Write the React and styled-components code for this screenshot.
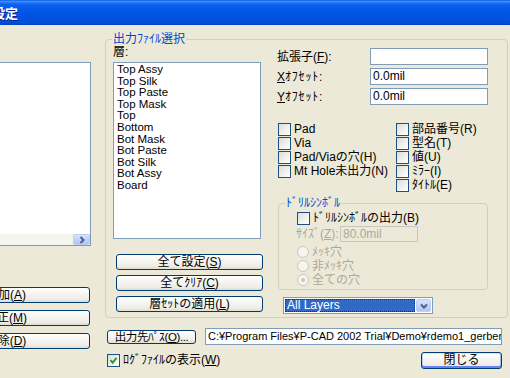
import React from "react";
import styled, { createGlobalStyle } from "styled-components";

const GlobalStyle = createGlobalStyle`
	html, body {
		margin: 0;
		padding: 0;
		background: #ece9d8;
	}
`;

const FONT = `"Liberation Sans", "Noto Sans CJK JP", sans-serif`;

const Window = styled.div`
	width: 510px;
	height: 378px;
	overflow: hidden;
	background: #ece9d8;
	font-family: ${FONT};
	font-size: 12px;
	color: #000;
`;

const TitleBar = styled.div`
	height: 25px;
	display: flex;
	align-items: center;
	overflow: hidden;
	background: linear-gradient(180deg, #0a5fe8 0%, #3d8cfb 6%, #0f62ef 16%, #0056e6 45%, #0051df 80%, #0047cc 100%);
`;

const TitleText = styled.div`
	margin-left: -8px;
	color: #fff;
	font-family: "Noto Sans CJK JP", sans-serif;
	font-weight: bold;
	font-size: 13px;
	line-height: 16px;
	white-space: nowrap;
	text-shadow: 1px 1px #0a1f8c;
`;

const Body = styled.div`
	display: flex;
	align-items: flex-start;
`;

const LeftCol = styled.div`
	flex-shrink: 0;
	width: 169px;
	margin-left: -78px;
	display: flex;
	flex-direction: column;
`;

const SideList = styled.div`
	box-sizing: border-box;
	margin-top: 37px;
	height: 184px;
	border: 1px solid #7f9db9;
	background: #fff;
	display: flex;
	flex-direction: column;
	justify-content: flex-end;
`;

const HScroll = styled.div`
	height: 11px;
	display: flex;
	justify-content: flex-end;
	background: #f5f4ef;
`;

const ScrollArrow = styled.div`
	box-sizing: border-box;
	width: 17px;
	height: 100%;
	display: flex;
	align-items: center;
	justify-content: center;
	border: 1px solid #bccdf7;
	border-radius: 2px;
	background: linear-gradient(180deg, #d6e2fd 0%, #c1d3fb 50%, #b1c6f6 100%);
`;

const SideButtons = styled.div`
	margin-top: 41px;
	display: flex;
	flex-direction: column;
	gap: 7px;
`;

const XPButton = styled.button`
	box-sizing: border-box;
	flex-shrink: 0;
	width: ${(p) => p.$w}px;
	height: ${(p) => p.$h || 16}px;
	padding: 0;
	border: 1px solid #003c74;
	border-radius: 3px;
	background: linear-gradient(180deg, #ffffff 0%, #f5f4f0 45%, #ecebe6 85%, #d6d0c5 100%);
	font-family: ${FONT};
	font-size: ${(p) => p.$fs || 12}px;
	letter-spacing: ${(p) => p.$ls || 0}px;
	line-height: 13px;
	color: #000;
	white-space: nowrap;
	box-shadow: ${(p) =>
		p.$default
			? "inset 0 1px #cee7ff, inset 0 -2px #6982ee, inset 1px 0 #b9d1fa, inset -1px 0 #9db9eb"
			: "inset 0 -1px #e3e0d6"};
`;

const Key = styled.u`
	text-decoration: underline;
	text-underline-offset: 1px;
`;

const RightCol = styled.div`
	flex-shrink: 0;
	width: 403px;
	margin-left: 14px;
	display: flex;
	flex-direction: column;
`;

const GroupBox = styled.div`
	box-sizing: border-box;
	margin-top: ${(p) => p.$top || 0}px;
	margin-left: ${(p) => p.$left || 0}px;
	width: ${(p) => (p.$w ? `${p.$w}px` : "auto")};
	height: ${(p) => p.$h}px;
	border: 1px solid #d0d0bf;
	border-radius: 4px;
	display: flex;
	flex-direction: column;
`;

const GroupTitle = styled.div`
	align-self: flex-start;
	height: 14px;
	margin: -8px 0 -6px 6px;
	padding: 0 1px;
	background: #ece9d8;
	color: #0046d5;
	line-height: 14px;
	white-space: nowrap;
`;

const GroupInner = styled.div`
	display: flex;
	padding-left: 7px;
`;

const LayerCol = styled.div`
	width: 150px;
	display: flex;
	flex-direction: column;
`;

const LayerLabel = styled.div`
	margin-top: 5px;
	height: 14px;
	line-height: 14px;
`;

const LayerList = styled.div`
	box-sizing: border-box;
	margin-top: 3px;
	width: 148px;
	height: 177px;
	padding: 1px 3px;
	border: 1px solid #7f9db9;
	background: #fff;
`;

const LayerItem = styled.div`
	font-size: 11.5px;
	line-height: 11.6px;
	white-space: nowrap;
`;

const ButtonStack = styled.div`
	margin: 15px 0 0 3px;
	display: flex;
	flex-direction: column;
	gap: 5px;
`;

const OptionCol = styled.div`
	width: 211px;
	margin-left: 14px;
	display: flex;
	flex-direction: column;
`;

const Fields = styled.div`
	margin-top: 8px;
	display: flex;
	flex-direction: column;
	gap: 3px;
`;

const FieldRow = styled.div`
	display: flex;
	align-items: center;
	height: ${(p) => p.$h || 17}px;
	margin-top: ${(p) => p.$top || 0}px;
`;

const FieldLabel = styled.div`
	width: ${(p) => p.$w}px;
	margin-left: ${(p) => p.$left || 0}px;
	line-height: 14px;
	white-space: nowrap;
	color: ${(p) => (p.$disabled ? "#aca899" : "#000")};
`;

const Kana = styled.span`
	letter-spacing: 0.8px;
`;

const TextBox = styled.div`
	box-sizing: border-box;
	flex-shrink: 0;
	width: ${(p) => p.$w}px;
	height: ${(p) => p.$h || 17}px;
	margin-left: ${(p) => p.$left || 0}px;
	padding-left: 2px;
	border: 1px solid ${(p) => (p.$disabled ? "#c9c7ba" : "#7f9db9")};
	background: ${(p) => (p.$disabled ? "#ece9d8" : "#fff")};
	color: ${(p) => (p.$disabled ? "#aca899" : "#000")};
	font-size: ${(p) => p.$fs || 12}px;
	line-height: ${(p) => (p.$h || 17) - 2}px;
	white-space: nowrap;
	overflow: hidden;
`;

const CheckGrid = styled.div`
	margin: 17px 0 0 1px;
	display: flex;
`;

const CheckCol = styled.div`
	width: ${(p) => p.$w || 118}px;
	display: flex;
	flex-direction: column;
`;

const CheckRow = styled.div`
	display: flex;
	align-items: center;
	gap: 3px;
	height: ${(p) => p.$h || 14}px;
	margin-top: ${(p) => p.$top || 0}px;
	line-height: 13px;
	white-space: nowrap;
	color: ${(p) => (p.$disabled ? "#aca899" : "#000")};
`;

const CheckBox = styled.span`
	box-sizing: border-box;
	flex-shrink: 0;
	width: 13px;
	height: 13px;
	display: inline-flex;
	align-items: center;
	justify-content: center;
	border: 1px solid #1c5180;
	background: linear-gradient(135deg, #dcdcd7 0%, #f2f2ef 60%, #ffffff 100%);
`;

const Radio = styled.span`
	box-sizing: border-box;
	flex-shrink: 0;
	width: 12px;
	height: 12px;
	border-radius: 50%;
	border: 1px solid #cac8bb;
	background: #f6f5f0;
	display: inline-flex;
	align-items: center;
	justify-content: center;

	&::after {
		content: "";
		width: 4px;
		height: 4px;
		border-radius: 50%;
		background: ${(p) => (p.$checked ? "#cac8bb" : "transparent")};
	}
`;

const DrillInner = styled.div`
	padding: 8px 0 0 18px;
	display: flex;
	flex-direction: column;
`;

const Combo = styled.div`
	box-sizing: border-box;
	margin: 7px 0 0 6px;
	width: 150px;
	height: 17px;
	padding: 1px;
	border: 1px solid #7f9db9;
	background: #fff;
	display: flex;
`;

const ComboValue = styled.div`
	box-sizing: border-box;
	flex: 1;
	padding-left: 1px;
	background: #316ac5;
	color: #fff;
	border: 1px dotted #2a2a2a;
	line-height: 11px;
	font-size: 12px;
`;

const ComboArrow = styled.div`
	box-sizing: border-box;
	width: 15px;
	margin-left: 1px;
	display: flex;
	align-items: center;
	justify-content: center;
	border: 1px solid #bccdf7;
	border-radius: 2px;
	background: linear-gradient(180deg, #d6e2fd 0%, #c1d3fb 50%, #b1c6f6 100%);
`;

const BottomRow = styled.div`
	display: flex;
	align-items: center;
	justify-content: ${(p) => p.$justify || "flex-start"};
	margin-top: ${(p) => p.$top}px;
	padding: 0 6px 0 2px;
`;

const layers = [
	"Top Assy",
	"Top Silk",
	"Top Paste",
	"Top Mask",
	"Top",
	"Bottom",
	"Bot Mask",
	"Bot Paste",
	"Bot Silk",
	"Bot Assy",
	"Board",
];

const leftChecks = ["Pad", "Via", "Pad/Viaの穴(H)", "Mt Hole未出力(N)"];
const rightChecks = ["部品番号(R)", "型名(T)", "値(U)", "ﾐﾗｰ(I)", "ﾀｲﾄﾙ(E)"];

function Chevron({ dir }) {
	const d = dir === "right" ? "M2.5 1 L5.5 4 L2.5 7" : "M1 2.5 L4 5.5 L7 2.5";
	return (
		<svg width="8" height="8" viewBox="0 0 8 8">
			<path d={d} fill="none" stroke="#4d6185" strokeWidth="2" />
		</svg>
	);
}

function Check({ checked, children, ...rest }) {
	return (
		<CheckRow {...rest}>
			<CheckBox>
				{checked && (
					<svg width="9" height="9" viewBox="0 0 9 9">
						<path d="M1.5 4.2 L3.6 6.6 L7.6 1.8" fill="none" stroke="#21a121" strokeWidth="2" />
					</svg>
				)}
			</CheckBox>
			<span>{children}</span>
		</CheckRow>
	);
}

function RadioItem({ checked, children }) {
	return (
		<CheckRow $disabled>
			<Radio $checked={checked} />
			<span>{children}</span>
		</CheckRow>
	);
}

export default function App() {
	return (
		<Window>
			<GlobalStyle />
			<TitleBar>
				<TitleText>設定</TitleText>
			</TitleBar>
			<Body>
				<LeftCol>
					<SideList>
						<HScroll>
							<ScrollArrow>
								<Chevron dir="right" />
							</ScrollArrow>
						</HScroll>
					</SideList>
					<SideButtons>
						<XPButton $w={168}>
							追加(<Key>A</Key>)
						</XPButton>
						<XPButton $w={168}>
							修正(<Key>M</Key>)
						</XPButton>
						<XPButton $w={168}>
							削除(<Key>D</Key>)
						</XPButton>
					</SideButtons>
				</LeftCol>

				<RightCol>
					<GroupBox $top={14} $h={279}>
						<GroupTitle>出力ﾌｧｲﾙ選択</GroupTitle>
						<GroupInner>
							<LayerCol>
								<LayerLabel>層:</LayerLabel>
								<LayerList>
									{layers.map((l) => (
										<LayerItem key={l}>{l}</LayerItem>
									))}
								</LayerList>
								<ButtonStack>
									<XPButton $w={147}>
										全て設定(<Key>S</Key>)
									</XPButton>
									<XPButton $w={147}>
										全てｸﾘｱ(<Key>C</Key>)
									</XPButton>
									<XPButton $w={147}>
										層ｾｯﾄの適用(<Key>L</Key>)
									</XPButton>
								</ButtonStack>
							</LayerCol>

							<OptionCol>
								<Fields>
									<FieldRow>
										<FieldLabel $w={93}>
											拡張子(<Key>F</Key>):
										</FieldLabel>
										<TextBox $w={118} />
									</FieldRow>
									<FieldRow>
										<FieldLabel $w={93}>
											<Key>X</Key>
											<Kana>ｵﾌｾｯﾄ</Kana>:
										</FieldLabel>
										<TextBox $w={118}>0.0mil</TextBox>
									</FieldRow>
									<FieldRow>
										<FieldLabel $w={93}>
											<Key>Y</Key>
											<Kana>ｵﾌｾｯﾄ</Kana>:
										</FieldLabel>
										<TextBox $w={118}>0.0mil</TextBox>
									</FieldRow>
								</Fields>

								<CheckGrid>
									<CheckCol>
										{leftChecks.map((c) => (
											<Check key={c}>{c}</Check>
										))}
									</CheckCol>
									<CheckCol $w={92}>
										{rightChecks.map((c) => (
											<Check key={c}>{c}</Check>
										))}
									</CheckCol>
								</CheckGrid>

								<GroupBox $top={11} $left={1} $w={210} $h={87}>
									<GroupTitle>ﾄﾞﾘﾙｼﾝﾎﾞﾙ</GroupTitle>
									<DrillInner>
										<Check $h={13}>ﾄﾞﾘﾙｼﾝﾎﾞﾙの出力(B)</Check>
										<FieldRow $h={16} $top={1}>
											<FieldLabel $w={44} $left={-1} $disabled>
												ｻｲｽﾞ(<Key>Z</Key>):
											</FieldLabel>
											<TextBox $w={78} $h={16} $disabled>
												80.0mil
											</TextBox>
										</FieldRow>
										<CheckRow $h={3} />
										<RadioItem>ﾒｯｷ穴</RadioItem>
										<RadioItem>非ﾒｯｷ穴</RadioItem>
										<RadioItem checked>全ての穴</RadioItem>
									</DrillInner>
								</GroupBox>

								<Combo>
									<ComboValue>All Layers</ComboValue>
									<ComboArrow>
										<Chevron dir="down" />
									</ComboArrow>
								</Combo>
							</OptionCol>
						</GroupInner>
					</GroupBox>

					<BottomRow $top={10}>
						<XPButton $w={89} $h={14} $fs={11.5} $ls={-0.4}>
							出力先ﾊﾟｽ(<Key>O</Key>)...
						</XPButton>
						<TextBox $w={297} $left={9} $fs={11}>
							C:¥Program Files¥P-CAD 2002 Trial¥Demo¥rdemo1_gerber
						</TextBox>
					</BottomRow>
					<BottomRow $top={7} $justify="space-between">
						<Check checked $h={17}>
							ﾛｸﾞﾌｧｲﾙの表示(<Key>W</Key>)
						</Check>
						<XPButton $w={81} $h={17} $default>
							閉じる
						</XPButton>
					</BottomRow>
				</RightCol>
			</Body>
		</Window>
	);
}
